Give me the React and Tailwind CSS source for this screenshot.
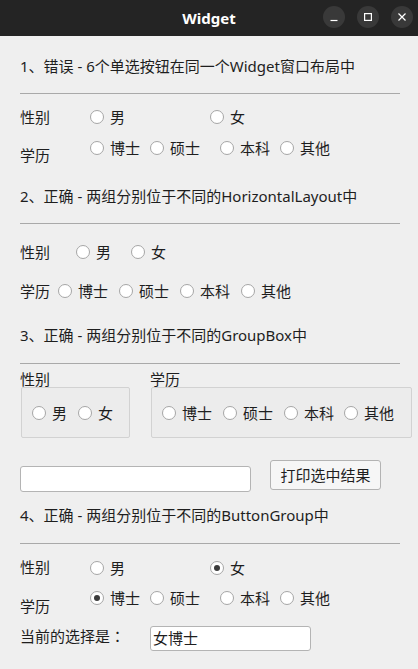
import React, { useState } from 'react';

function Radio({ label, checked, onClick, className = '' }) {
  return (
    <label onClick={onClick} className={`flex items-center gap-[6px] cursor-default ${className}`}>
      <span className="flex h-[14px] w-[14px] shrink-0 items-center justify-center rounded-full border border-[#a6a6a6] bg-white">
        {checked && <span className="h-[6px] w-[6px] rounded-full bg-[#3b3b3b]" />}
      </span>
      <span>{label}</span>
    </label>
  );
}

function Rule({ className = '' }) {
  return <div className={`h-px w-[380px] bg-[#a9a9a9] ${className}`} />;
}

export default function App() {
  const [sex, setSex] = useState('女');
  const [edu, setEdu] = useState('博士');

  return (
    <div className="h-[669px] w-[418px] overflow-hidden bg-[#efefef] font-['Noto_Sans','Noto_Sans_CJK_SC',sans-serif] text-[15px] text-[#1e1e1e]">
      {/* title bar */}
      <div className="relative flex h-[36px] items-center justify-center bg-[#242424]">
        <span className="text-[15px] font-bold text-white">Widget</span>
        <div className="absolute right-[5px] top-[6px] flex gap-[12px]">
          <span className="flex h-[22px] w-[22px] items-center justify-center rounded-full bg-[#393939]">
            <svg width="10" height="10" viewBox="0 0 10 10"><path d="M1.5 8.5h7" stroke="#fff" strokeWidth="1.2" /></svg>
          </span>
          <span className="flex h-[22px] w-[22px] items-center justify-center rounded-full bg-[#393939]">
            <svg width="10" height="10" viewBox="0 0 10 10"><rect x="1.6" y="1.6" width="6.8" height="6.8" fill="none" stroke="#fff" strokeWidth="1.2" /></svg>
          </span>
          <span className="flex h-[22px] w-[22px] items-center justify-center rounded-full bg-[#393939]">
            <svg width="10" height="10" viewBox="0 0 10 10"><path d="M1.5 1.5l7 7M8.5 1.5l-7 7" stroke="#fff" strokeWidth="1.2" /></svg>
          </span>
        </div>
      </div>

      <div className="flex flex-col pl-[20px] leading-[20px]">
        {/* section 1 */}
        <div className="mt-[20px] h-[20px]">1、错误 - 6个单选按钮在同一个Widget窗口布局中</div>
        <Rule className="mt-[17px]" />
        <div className="mt-[13px] flex h-[20px] items-center">
          <span className="w-[70px]">性别</span>
          <Radio label="男" className="w-[120px]" />
          <Radio label="女" />
        </div>
        <div className="mt-[11px] flex items-start">
          <span className="mt-[7px] w-[70px]">学历</span>
          <Radio label="博士" className="w-[60px]" />
          <Radio label="硕士" className="w-[70px]" />
          <Radio label="本科" className="w-[60px]" />
          <Radio label="其他" />
        </div>

        {/* section 2 */}
        <div className="mt-[21px] h-[20px]">2、正确 - 两组分别位于不同的HorizontalLayout中</div>
        <Rule className="mt-[17px]" />
        <div className="mt-[18px] flex h-[20px] items-center">
          <span className="w-[56px]">性别</span>
          <Radio label="男" className="w-[55px]" />
          <Radio label="女" />
        </div>
        <div className="mt-[19px] flex h-[20px] items-center">
          <span className="w-[38px]">学历</span>
          <Radio label="博士" className="w-[61px]" />
          <Radio label="硕士" className="w-[61px]" />
          <Radio label="本科" className="w-[61px]" />
          <Radio label="其他" />
        </div>

        {/* section 3 */}
        <div className="mt-[24px] h-[20px]">3、正确 - 两组分别位于不同的GroupBox中</div>
        <Rule className="mt-[18px]" />
        <div className="mt-[8px] flex">
          <div className="flex w-[130px] flex-col">
            <span className="h-[15px] leading-[15px]">性别</span>
            <div className="ml-[1px] flex h-[51px] w-[109px] items-center rounded-[2px] border border-[#d2d2d2] bg-[#ececec] pl-[10px]">
              <Radio label="男" className="w-[46px]" />
              <Radio label="女" />
            </div>
          </div>
          <div className="flex flex-col">
            <span className="h-[15px] leading-[15px]">学历</span>
            <div className="ml-[1px] flex h-[51px] w-[261px] items-center rounded-[2px] border border-[#d2d2d2] bg-[#ececec] pl-[10px]">
              <Radio label="博士" className="w-[61px]" />
              <Radio label="硕士" className="w-[61px]" />
              <Radio label="本科" className="w-[60px]" />
              <Radio label="其他" />
            </div>
          </div>
        </div>
        <div className="mt-[22px] flex items-start">
          <input className="mt-[6px] h-[26px] w-[231px] rounded-[3px] border border-[#b4b4b4] bg-white px-[4px] outline-none" />
          <button className="ml-[19px] h-[30px] w-[111px] rounded-[3px] border border-[#b3b3b3] bg-[#f6f6f6] text-[15px] text-[#1e1e1e]">
            打印选中结果
          </button>
        </div>

        {/* section 4 */}
        <div className="mt-[13px] h-[20px]">4、正确 - 两组分别位于不同的ButtonGroup中</div>
        <Rule className="mt-[18px]" />
        <div className="mt-[14px] flex h-[20px] items-center">
          <span className="mt-[-3px] w-[70px]">性别</span>
          <Radio label="男" className="w-[120px]" checked={sex === '男'} onClick={() => setSex('男')} />
          <Radio label="女" checked={sex === '女'} onClick={() => setSex('女')} />
        </div>
        <div className="mt-[10px] flex items-start">
          <span className="mt-[8px] w-[70px]">学历</span>
          {[['博士', 'w-[60px]'], ['硕士', 'w-[70px]'], ['本科', 'w-[60px]'], ['其他', '']].map(([e, w]) => (
            <Radio key={e} label={e} className={w} checked={edu === e} onClick={() => setEdu(e)} />
          ))}
        </div>
        <div className="mt-[10px] flex items-start">
          <span className="w-[130px]">
            当前的选择是<span className="font-['Noto_Sans_CJK_JP',sans-serif]">：</span>
          </span>
          <div className="h-[25px] w-[161px] rounded-[3px] border border-[#b4b4b4] bg-white pl-[2px] leading-[23px]">
            {sex + edu}
          </div>
        </div>
      </div>
    </div>
  );
}
